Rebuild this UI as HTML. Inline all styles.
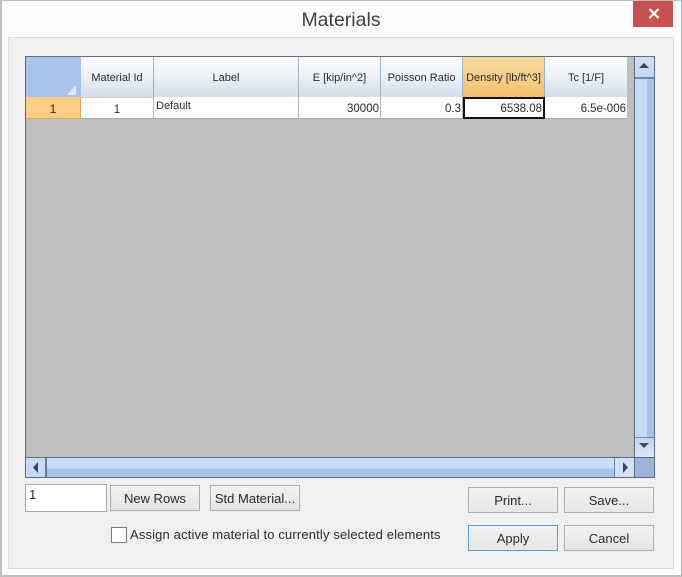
<!DOCTYPE html>
<html><head><meta charset="utf-8"><style>
html,body{margin:0;padding:0}
body{width:682px;height:577px;overflow:hidden;position:relative;background:#fcfcfc;font-family:"Liberation Sans",sans-serif;color:#111}
div{position:absolute;box-sizing:border-box}
.h{top:57px;height:40px;background:linear-gradient(#fafbfd,#eef2f7 45%,#d3deeb);border-right:1px solid #9fb2c8;font-size:11px;line-height:43px;text-align:center;color:#2a2a2a}
.c{top:97px;height:22px;background:#fff;border-right:1px solid #b4b4b4;border-bottom:1px solid #a8a8a8;font-size:11.500px;line-height:24px;text-align:right;color:#2a2a2a;padding-right:1px}
.b{background:linear-gradient(#f2f2f2,#e6e6e6);border:1px solid #acacac;font-size:13px;text-align:center;color:#2a2a2a;height:26px;line-height:25px;width:90px}
</style></head><body>
<div style="left:0;top:0;width:682px;height:577px;border:1px solid #bdbdbd;border-width:1px 1px 2px 2px"></div>
<div style="left:633px;top:1px;width:40px;height:26px;background:#c75050"></div>
<svg style="position:absolute;left:648px;top:8px" width="12" height="11"><path d="M1.500 1L10.500 10M10.500 1L1.500 10" stroke="#fff" stroke-width="2.200" fill="none"/></svg>
<div style="left:0;top:8px;width:682px;text-align:center;font-size:19.500px;line-height:24px;color:#3a434f">Materials</div>
<div style="left:8px;top:37px;width:666px;height:532px;background:#f0f0f0;border:1px solid #dcdcdc"></div>

<div style="left:25px;top:56px;width:630px;height:422px;background:#bebebe;border:1px solid #5d6b7d;border-width:1px 1px 2px 1px"></div>
<div style="left:26px;top:57px;width:55px;height:40px;background:#a9c4e8"></div>
<svg style="position:absolute;left:67px;top:85px" width="10" height="10"><path d="M9 0V10H0Z" fill="#dfe8f4"/></svg>
<div class="h" style="left:81px;width:73px">Material Id</div>
<div class="h" style="left:154px;width:145px">Label</div>
<div class="h" style="left:299px;width:82px">E [kip/in^2]</div>
<div class="h" style="left:381px;width:82px">Poisson Ratio</div>
<div class="h" style="left:463px;width:82px;background:linear-gradient(#fcd9a0,#f8cf8b 50%,#efbf6e)">Density [lb/ft^3]</div>
<div class="h" style="left:545px;width:82px;border-right:0">Tc [1/F]</div>

<div style="left:26px;top:97px;width:55px;height:22px;background:#fdcd83;border-right:1px solid #e5a55c;border-bottom:1px solid #e5a55c;font-size:12px;line-height:24px;text-align:center;color:#2a2a2a">1</div>
<div class="c" style="left:81px;width:73px;text-align:center;padding:0;border-top:1px solid #f0c89a">1</div>
<div class="c" style="left:154px;width:145px;text-align:left;padding-left:2px;line-height:18px;font-size:11px">Default</div>
<div class="c" style="left:299px;width:82px">30000</div>
<div class="c" style="left:381px;width:82px">0.3</div>
<div class="c" style="left:463px;width:82px;border:2px solid #111;line-height:20px;padding-right:1px;height:22px">6538.08</div>
<div class="c" style="left:545px;width:82px;border-right:0">6.5e-006</div>

<div style="left:634px;top:57px;width:20px;height:420px;background:linear-gradient(90deg,#c6d9f6 0 62%,#a9c3ea 62%);border-left:1px solid #5d6b7d"></div>
<div style="left:635px;top:57px;width:19px;height:22px;background:linear-gradient(#d3e1f5,#c3d6f2);border-bottom:2px solid #6f86a6"></div>
<svg style="position:absolute;left:638px;top:62px" width="12" height="7"><path d="M6 1L11 6H1Z" fill="#3d4658"/></svg>
<div style="left:635px;top:437px;width:19px;height:20px;background:linear-gradient(#c3d6f2,#d8e4f6);border-top:1px solid #6f86a6"></div>
<svg style="position:absolute;left:638px;top:442px" width="12" height="7"><path d="M1 1H11L6 6Z" fill="#3d4658"/></svg>
<div style="left:634px;top:457px;width:20px;height:20px;background:#9bb4dc;border-top:1px solid #5d6b7d;border-left:1px solid #5d6b7d"></div>

<div style="left:26px;top:457px;width:608px;height:20px;background:linear-gradient(#cbdcf7 0 55%,#aac5ec 55%);border-top:1px solid #5d6b7d"></div>
<div style="left:26px;top:458px;width:21px;height:19px;background:#c8daf5;border-right:2px solid #5f7ba3"></div>
<svg style="position:absolute;left:32px;top:461px" width="8" height="13"><path d="M6 1V12L1 6.500Z" fill="#3d4658"/></svg>
<div style="left:614px;top:458px;width:20px;height:19px;background:#d3e1f7;border-left:1px solid #6f86a6"></div>
<svg style="position:absolute;left:622px;top:461px" width="8" height="13"><path d="M1 1V12L6 6.500Z" fill="#3d4658"/></svg>

<div style="left:25px;top:484px;width:82px;height:28px;background:#fff;border:1px solid #a8a8a8;font-size:13px;line-height:19px;padding-left:3px;color:#2a2a2a">1</div>
<div class="b" style="left:110px;top:485px">New Rows</div>
<div class="b" style="left:210px;top:485px">Std Material...</div>
<div class="b" style="left:468px;top:487px">Print...</div>
<div class="b" style="left:564px;top:487px">Save...</div>
<div class="b" style="left:468px;top:525px;border-color:#5b9bd5;line-height:26px">Apply</div>
<div class="b" style="left:564px;top:525px;line-height:26px">Cancel</div>

<div style="left:111px;top:527px;width:16px;height:16px;background:#fff;border:1px solid #7a7a7a"></div>
<div style="left:130px;top:527px;font-size:13px;letter-spacing:.15px;line-height:16px;white-space:nowrap;color:#2a2a2a">Assign active material to currently selected elements</div>
</body></html>
